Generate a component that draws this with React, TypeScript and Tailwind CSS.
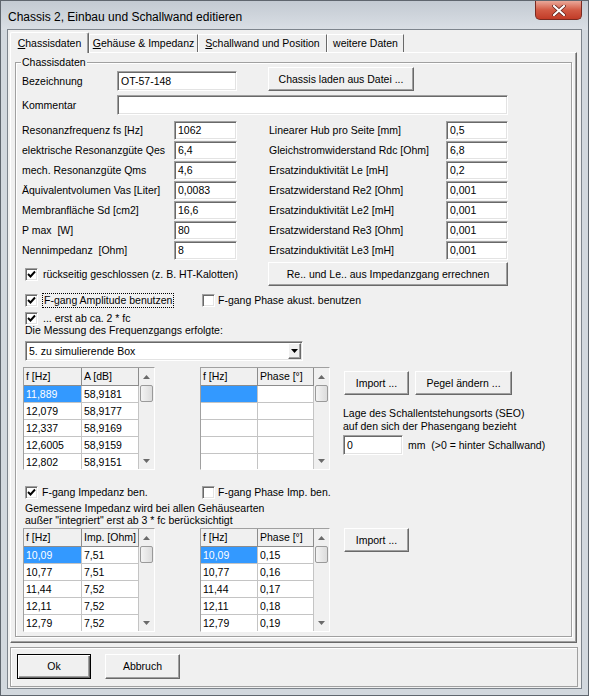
import type { ReactNode } from "react"

const edit =
  "bg-white border border-t-[#a0a0a0] border-l-[#a0a0a0] border-r-white border-b-white shadow-[inset_1px_1px_0_#696969,inset_-1px_-1px_0_#e3e3e3]"
const btn =
  "bg-[#f0f0f0] border border-t-white border-l-white border-r-[#696969] border-b-[#696969] shadow-[inset_-1px_-1px_0_#a0a0a0] flex items-center justify-center"

function Check({ on }: { on?: boolean }) {
  return (
    <div className={`${edit} w-[13px] h-[13px] shrink-0 flex items-center justify-center`}>
      {on && (
        <svg width="9" height="9" viewBox="0 0 9 9">
          <path d="M1 4 L3.5 6.5 L8 1.5" fill="none" stroke="#000" strokeWidth="1.9" />
        </svg>
      )}
    </div>
  )
}

function Scrollbar() {
  return (
    <div className="flex-1 h-full bg-[#f0f0f0] flex flex-col">
      <div className="h-[17px] flex items-center justify-center">
        <svg width="7" height="4" viewBox="0 0 7 4">
          <path d="M0 4 L3.5 0 L7 4Z" fill="#6a6a6a" />
        </svg>
      </div>
      <div className="mx-[1px] h-[17px] rounded-[2px] border border-[#9a9a9a] bg-gradient-to-r from-[#f4f4f4] to-[#dcdcdc]" />
      <div className="flex-1" />
      <div className="h-[17px] flex items-center justify-center">
        <svg width="7" height="4" viewBox="0 0 7 4">
          <path d="M0 0 L3.5 4 L7 0Z" fill="#6a6a6a" />
        </svg>
      </div>
    </div>
  )
}

function Grid({
  size,
  cols,
  head,
  rows,
  sel,
}: {
  size: string
  cols: string[]
  head: string[]
  rows: string[][]
  sel?: boolean
}) {
  return (
    <div className={`${edit} ${size} flex overflow-hidden`}>
      <div className="flex flex-col">
        <div className="flex h-[18px] shrink-0">
          {head.map((t, i) => (
            <div
              key={i}
              className={`${cols[i]} h-full bg-[#f0f0f0] border-r border-b border-[#8c8c8c] pl-[2px] flex items-center`}
            >
              {t}
            </div>
          ))}
        </div>
        {rows.map((r, ri) => (
          <div key={ri} className="flex h-[17px] shrink-0">
            {r.map((c, ci) => (
              <div
                key={ci}
                className={`${cols[ci]} h-full border-r border-b border-[#c4c4c4] pl-[2px] flex items-center ${
                  sel && ri === 0 && ci === 0 ? "bg-[#3399ff] text-white" : "bg-white"
                }`}
              >
                {c}
              </div>
            ))}
          </div>
        ))}
      </div>
      <Scrollbar />
    </div>
  )
}

function Param({ a, av, b, bv }: { a: string; av: string; b: string; bv: string }) {
  return (
    <div className="flex h-[20px] items-center">
      <div className="w-[152px] whitespace-pre">{a}</div>
      <div className={`${edit} w-[63px] h-[19px] pl-[3px] flex items-center`}>{av}</div>
      <div className="ml-[32px] w-[177px]">{b}</div>
      <div className={`${edit} w-[62px] h-[19px] pl-[3px] flex items-center`}>{bv}</div>
    </div>
  )
}

function Tab({ w, active, children }: { w: string; active?: boolean; children: ReactNode }) {
  return active ? (
    <div
      className={`${w} relative z-10 -mb-px h-[21px] bg-[#f0f0f0] border-t border-l border-t-white border-l-white border-r border-r-[#696969] rounded-t-[2px] shadow-[inset_-1px_0_0_#a0a0a0] flex items-center justify-center`}
    >
      {children}
    </div>
  ) : (
    <div
      className={`${w} h-[18px] border-t border-l border-t-white border-l-white border-r border-r-[#696969] flex items-center justify-center`}
    >
      {children}
    </div>
  )
}

export default function App() {
  return (
    <div className="font-['Liberation_Sans',Arial,sans-serif] w-[589px] h-[696px] bg-[#d2d8de] border border-[#5f666e] flex flex-col text-[10.5px] leading-[13px] text-black overflow-hidden">
      {/* title bar */}
      <div className="h-[29px] flex items-start justify-between bg-gradient-to-b from-[#c3cad2] to-[#dadfe5]">
        <div className="ml-[7px] mt-[8px] text-[12px] leading-[16px]">
          Chassis 2, Einbau und Schallwand editieren
        </div>
        <div className="mr-[6px] w-[47px] h-[19px] rounded-b-[5px] border border-t-0 border-[#7a2a20] bg-gradient-to-b from-[#e9a899] via-[#d25a44] to-[#c13b27] flex items-center justify-center">
          <svg width="14" height="11" viewBox="0 0 14 11">
            <path d="M2 1 L12 10 M12 1 L2 10" stroke="#5a1f18" strokeWidth="3.6" strokeLinecap="round" />
            <path d="M2 1 L12 10 M12 1 L2 10" stroke="#fff" strokeWidth="2.2" strokeLinecap="round" />
          </svg>
        </div>
      </div>

      {/* client */}
      <div className="ml-[7px] w-[573px] h-[658px] bg-[#f0f0f0] flex flex-col shadow-[0_0_0_1px_#7d848c]">
        <div className="flex items-end h-[22px] pl-[2px]">
          <Tab w="w-[79px]" active>
            <span>
              <u>C</u>hassisdaten
            </span>
          </Tab>
          <Tab w="w-[109px]">
            <span>
              <u>G</u>ehäuse &amp; Impedanz
            </span>
          </Tab>
          <Tab w="w-[129px]">
            <span>
              <u>S</u>challwand und Position
            </span>
          </Tab>
          <Tab w="w-[77px]">weitere Daten</Tab>
        </div>

        <div className="ml-[2px] w-[567px] h-[591px] border border-t-white border-l-white border-r-[#696969] border-b-[#696969] shadow-[inset_-1px_-1px_0_#a0a0a0] pt-[9px] pl-[4px]">
          <div className="relative w-[557px] h-[575px] border border-[#a0a0a0] shadow-[inset_1px_1px_0_#fff,1px_1px_0_#fff] pl-[6px] flex flex-col">
            <div className="absolute left-[5px] -top-[7px] bg-[#f0f0f0] px-[1px]">Chassisdaten</div>

            <div className="mt-[4px] h-[24px] flex">
              <div className="w-[95px] h-[20px] self-end flex items-center">Bezeichnung</div>
              <div className={`${edit} w-[120px] h-[20px] self-end flex items-center pl-[3px]`}>OT-57-148</div>
              <div className={`${btn} ml-[31px] w-[146px] h-[24px]`}>Chassis laden aus Datei ...</div>
            </div>

            <div className="mt-[4px] h-[20px] flex items-center">
              <div className="w-[95px]">Kommentar</div>
              <div className={`${edit} w-[391px] h-[20px]`} />
            </div>

            <div className="mt-[5px] flex flex-col">
              <Param a="Resonanzfrequenz fs [Hz]" av="1062" b="Linearer Hub pro Seite [mm]" bv="0,5" />
              <Param a="elektrische Resonanzgüte Qes" av="6,4" b="Gleichstromwiderstand Rdc [Ohm]" bv="6,8" />
              <Param a="mech. Resonanzgüte Qms" av="4,6" b="Ersatzinduktivität Le [mH]" bv="0,2" />
              <Param a="Äquivalentvolumen Vas [Liter]" av="0,0083" b="Ersatzwiderstand Re2 [Ohm]" bv="0,001" />
              <Param a="Membranfläche Sd [cm2]" av="16,6" b="Ersatzinduktivität Le2 [mH]" bv="0,001" />
              <Param a="P max  [W]" av="80" b="Ersatzwiderstand Re3 [Ohm]" bv="0,001" />
              <Param a="Nennimpedanz  [Ohm]" av="8" b="Ersatzinduktivität Le3 [mH]" bv="0,001" />
            </div>

            <div className="mt-[2px] h-[24px] flex items-center">
              <div className="w-[246px] flex items-center">
                <div className="ml-[3px]">
                  <Check on />
                </div>
                <span className="ml-[5px]">rückseitig geschlossen (z. B. HT-Kalotten)</span>
              </div>
              <div className={`${btn} w-[240px] h-[24px]`}>Re.. und Le.. aus Impedanzgang errechnen</div>
            </div>

            <div className="mt-[7px] h-[15px] flex items-center">
              <div className="w-[180px] flex items-center">
                <div className="ml-[3px]">
                  <Check on />
                </div>
                <span className="ml-[4px] h-[15px] px-[1px] border border-dotted border-black flex items-center">
                  F-gang Amplitude benutzen
                </span>
              </div>
              <Check />
              <span className="ml-[3px]">F-gang Phase akust. benutzen</span>
            </div>

            <div className="mt-[4px] h-[12px] flex items-center">
              <div className="ml-[3px]">
                <Check on />
              </div>
              <span className="ml-[5px]">... erst ab ca. 2 * fc</span>
            </div>

            <div className="h-[13px] pl-[3px] flex items-center">Die Messung des Frequenzgangs erfolgte:</div>

            <div className="mt-[4px] h-[20px] flex">
              <div className={`${edit} ml-[3px] w-[278px] h-[20px] pl-[3px] pr-[1px] flex items-center justify-between`}>
                <span>5. zu simulierende Box</span>
                <div className={`${btn} w-[13px] h-[16px]`}>
                  <svg width="7" height="4" viewBox="0 0 7 4">
                    <path d="M0 0 L3.5 4 L7 0Z" fill="#000" />
                  </svg>
                </div>
              </div>
            </div>

            <div className="mt-[6px] h-[103px] flex">
              <div className="ml-[1px]">
                <Grid
                  size="w-[132px] h-[103px]"
                  cols={["w-[58px]", "w-[57px]"]}
                  head={["f [Hz]", "A [dB]"]}
                  rows={[
                    ["11,889", "58,9181"],
                    ["12,079", "58,9177"],
                    ["12,337", "58,9169"],
                    ["12,6005", "58,9159"],
                    ["12,802", "58,9151"],
                  ]}
                  sel
                />
              </div>
              <div className="ml-[45px]">
                <Grid
                  size="w-[130px] h-[103px]"
                  cols={["w-[57px]", "w-[56px]"]}
                  head={["f [Hz]", "Phase [°]"]}
                  rows={[
                    ["", ""],
                    ["", ""],
                    ["", ""],
                    ["", ""],
                    ["", ""],
                  ]}
                  sel
                />
              </div>
              <div className="ml-[13px] flex flex-col">
                <div className="mt-[4px] flex">
                  <div className={`${btn} ml-[1px] w-[65px] h-[24px]`}>Import ...</div>
                  <div className={`${btn} ml-[6px] w-[97px] h-[24px]`}>Pegel ändern ...</div>
                </div>
                <div className="mt-[12px] h-[13px]">Lage des Schallentstehungsorts (SEO)</div>
                <div className="h-[13px]">auf den sich der Phasengang bezieht</div>
                <div className="mt-[2px] flex items-center">
                  <div className={`${edit} w-[60px] h-[20px] pl-[3px] flex items-center`}>0</div>
                  <span className="ml-[5px] whitespace-pre">mm  (&gt;0 = hinter Schallwand)</span>
                </div>
              </div>
            </div>

            <div className="mt-[16px] h-[13px] flex items-center">
              <div className="w-[180px] flex items-center">
                <div className="ml-[3px]">
                  <Check on />
                </div>
                <span className="ml-[4px]">F-gang Impedanz ben.</span>
              </div>
              <Check />
              <span className="ml-[3px]">F-gang Phase Imp. ben.</span>
            </div>

            <div className="mt-[3px] h-[12px] pl-[3px] flex items-center">
              Gemessene Impedanz wird bei allen Gehäusearten
            </div>
            <div className="h-[12px] pl-[3px] flex items-center">
              außer "integriert" erst ab 3 * fc berücksichtigt
            </div>

            <div className="mt-[2px] h-[104px] flex">
              <div className="ml-[1px]">
                <Grid
                  size="w-[132px] h-[104px]"
                  cols={["w-[58px]", "w-[57px]"]}
                  head={["f [Hz]", "Imp. [Ohm]"]}
                  rows={[
                    ["10,09", "7,51"],
                    ["10,77", "7,51"],
                    ["11,44", "7,52"],
                    ["12,11", "7,52"],
                    ["12,79", "7,52"],
                  ]}
                  sel
                />
              </div>
              <div className="ml-[45px]">
                <Grid
                  size="w-[130px] h-[104px]"
                  cols={["w-[57px]", "w-[56px]"]}
                  head={["f [Hz]", "Phase [°]"]}
                  rows={[
                    ["10,09", "0,15"],
                    ["10,77", "0,16"],
                    ["11,44", "0,17"],
                    ["12,11", "0,18"],
                    ["12,79", "0,19"],
                  ]}
                  sel
                />
              </div>
              <div className={`${btn} ml-[14px] w-[65px] h-[24px]`}>Import ...</div>
            </div>
          </div>
        </div>

        <div className="mt-[4px] ml-[2px] w-[568px] h-[40px] border border-[#a0a0a0] shadow-[inset_1px_1px_0_#fff] pt-[6px] pl-[6px] flex items-start">
          <div className="w-[74px] h-[25px] bg-[#f0f0f0] border border-black shadow-[inset_1px_1px_0_#fff,inset_-1px_-1px_0_#696969,inset_-2px_-2px_0_#a0a0a0] flex items-center justify-center">
            Ok
          </div>
          <div className={`${btn} ml-[14px] w-[75px] h-[25px]`}>Abbruch</div>
        </div>
      </div>
    </div>
  )
}
